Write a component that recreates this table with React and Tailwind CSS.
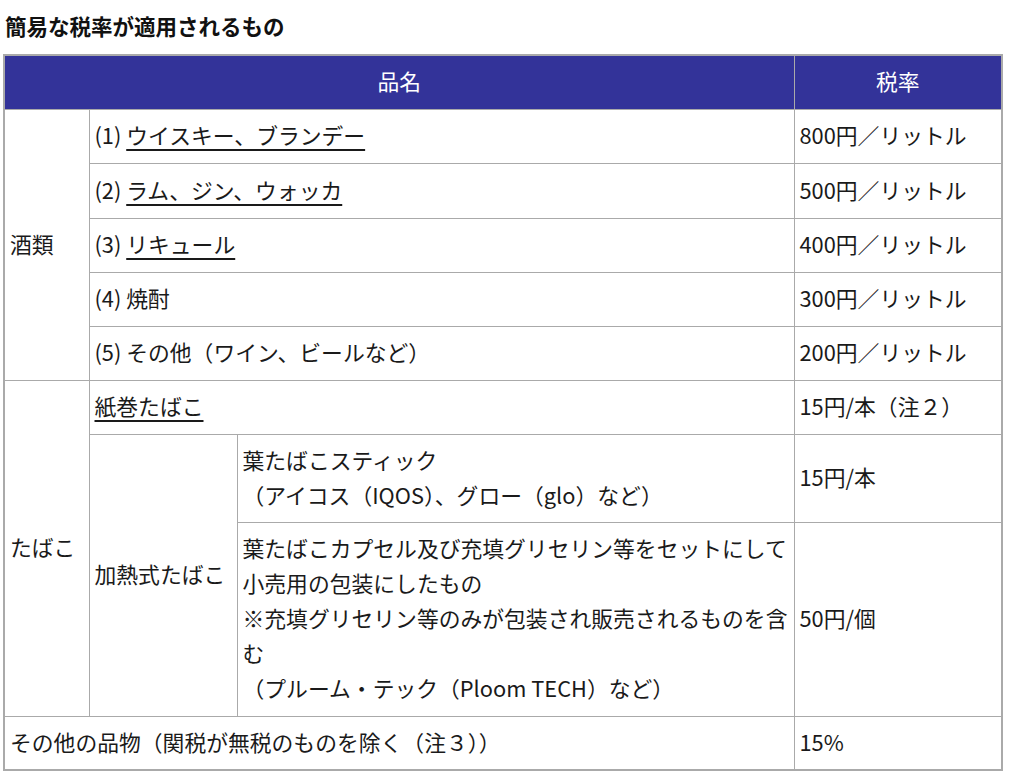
export default function App() {
  const td = "border border-[#aaa] px-[5px] pb-[3px] align-middle";
  const link = "underline underline-offset-[5px] decoration-[1.5px]";
  return (
    <div className="min-h-[777px] bg-white text-[#1a1a1a] pt-[12px] px-[3px]" style={{ fontFamily: '"Noto Sans CJK JP", "Noto Sans", sans-serif' }}>
      <h2 className="text-[21.5px] font-bold leading-[28px] pl-[2px] text-[#111]">簡易な税率が適用されるもの</h2>
      <table className="mt-[14px] w-[998px] table-fixed border-collapse border-2 border-[#aaa] text-[21.8px] leading-[35px]">
        <colgroup>
          <col className="w-[85px]" />
          <col className="w-[148px]" />
          <col className="w-[557px]" />
          <col className="w-[208px]" />
        </colgroup>
        <thead>
          <tr className="h-[54px] bg-[#333399] text-white">
            <th colSpan={3} className="border border-[#aaa] pb-[3px] font-normal text-center">品名</th>
            <th className="border border-[#aaa] pb-[3px] font-normal text-center">税率</th>
          </tr>
        </thead>
        <tbody>
          <tr className="h-[54px]">
            <td rowSpan={5} className={td}>酒類</td>
            <td colSpan={2} className={td}>(1)&nbsp;<span className={link}>ウイスキー、ブランデー</span></td>
            <td className={td}>800円／リットル</td>
          </tr>
          <tr className="h-[55px]">
            <td colSpan={2} className={td}>(2)&nbsp;<span className={link}>ラム、ジン、ウォッカ</span></td>
            <td className={td}>500円／リットル</td>
          </tr>
          <tr className="h-[54px]">
            <td colSpan={2} className={td}>(3)&nbsp;<span className={link}>リキュール</span></td>
            <td className={td}>400円／リットル</td>
          </tr>
          <tr className="h-[54px]">
            <td colSpan={2} className={td}>(4)&nbsp;焼酎</td>
            <td className={td}>300円／リットル</td>
          </tr>
          <tr className="h-[54px]">
            <td colSpan={2} className={td}>(5)&nbsp;その他（ワイン、ビールなど）</td>
            <td className={td}>200円／リットル</td>
          </tr>
          <tr className="h-[54px]">
            <td rowSpan={3} className={td}>たばこ</td>
            <td colSpan={2} className={td}><span className={link}>紙巻たばこ</span></td>
            <td className={td}>15円/本（注２）</td>
          </tr>
          <tr className="h-[88px]">
            <td rowSpan={2} className={td}>加熱式たばこ</td>
            <td className={td}>
              葉たばこスティック<br />（アイコス（IQOS）、グロー（glo）など）
            </td>
            <td className={td}>15円/本</td>
          </tr>
          <tr className="h-[194px]">
            <td className={td + " whitespace-nowrap"}>
              葉たばこカプセル及び充填グリセリン等をセットにして<br />
              小売用の包装にしたもの<br />
              ※充填グリセリン等のみが包装され販売されるものを含<br />
              む<br />
              （プルーム・テック（Ploom TECH）など）
            </td>
            <td className={td}>50円/個</td>
          </tr>
          <tr className="h-[54px]">
            <td colSpan={3} className={td}>その他の品物（関税が無税のものを除く（注３））</td>
            <td className={td}>15%</td>
          </tr>
        </tbody>
      </table>
    </div>
  );
}
